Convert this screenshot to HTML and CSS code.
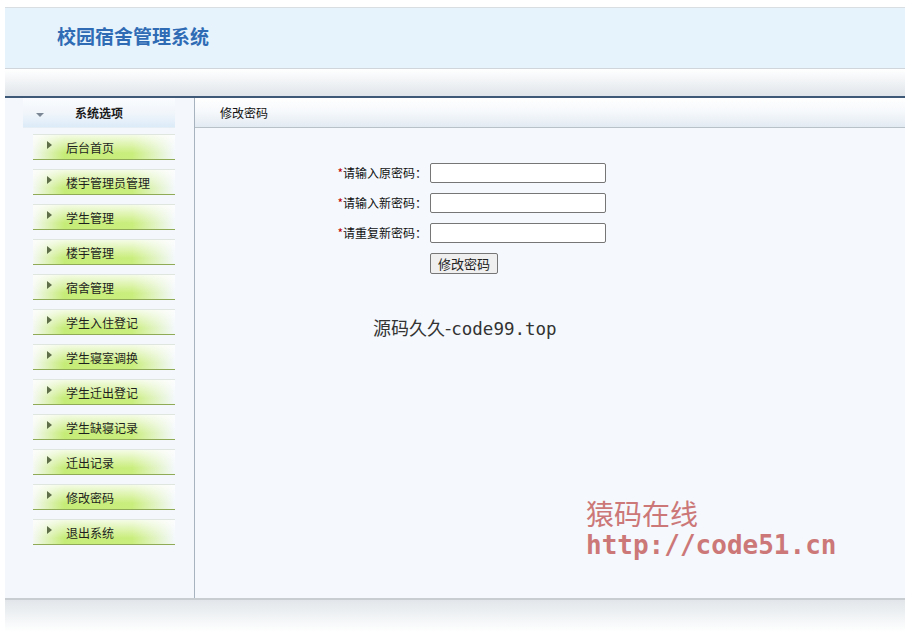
FILE: index.html
```html
<!DOCTYPE html>
<html lang="zh-CN">
<head>
  <meta charset="UTF-8">
  <title>校园宿舍管理系统</title>
  <link rel="stylesheet" href="styles.css">
</head>
<body>
  <div class="page">
    <!-- 顶部 -->
    <div class="top">
      <h1 class="logo">校园宿舍管理系统</h1>
    </div>
    <div class="bar"></div>

    <div class="main">
      <!-- 左侧菜单 -->
      <div class="side">
        <div class="side-title"><span class="down"></span>系统选项</div>
        <ul class="menu">
          <li><span class="arrow"></span>后台首页</li>
          <li><span class="arrow"></span>楼宇管理员管理</li>
          <li><span class="arrow"></span>学生管理</li>
          <li><span class="arrow"></span>楼宇管理</li>
          <li><span class="arrow"></span>宿舍管理</li>
          <li><span class="arrow"></span>学生入住登记</li>
          <li><span class="arrow"></span>学生寝室调换</li>
          <li><span class="arrow"></span>学生迁出登记</li>
          <li><span class="arrow"></span>学生缺寝记录</li>
          <li><span class="arrow"></span>迁出记录</li>
          <li><span class="arrow"></span>修改密码</li>
          <li><span class="arrow"></span>退出系统</li>
        </ul>
      </div>

      <!-- 右侧内容 -->
      <div class="content">
        <div class="content-title">修改密码</div>
        <form class="form">
          <label><i>*</i>请输入原密码：</label>
          <input type="password">
          <label><i>*</i>请输入新密码：</label>
          <input type="password">
          <label><i>*</i>请重复新密码：</label>
          <input type="password">
          <span></span>
          <div><button type="button">修改密码</button></div>
        </form>
        <p class="mark">源码久久-<span class="mono">code99.top</span></p>
        <div class="stamp">
          <div class="stamp-cn">猿码在线</div>
          <div class="stamp-url">http://code51.cn</div>
        </div>
      </div>
    </div>

    <div class="foot"></div>
  </div>
</body>
</html>
```

FILE: styles.css
```css
/* 基础 */
body {
  margin: 0;
  background: #ffffff;
  font-family: "Noto Sans CJK SC", "DejaVu Sans", sans-serif;
  font-size: 12px;
  color: #222222;
}

.page {
  width: 900px;
  margin: 0 0 0 5px;
  padding-top: 7px;
}

/* 顶部标题 */
.top {
  height: 60px;
  border-top: 1px solid #d9dee3;
  background: #e6f3fc;
  display: flex;
  align-items: center;
}

.logo {
  margin: 0 0 6px 52px;
  font-size: 19px;
  font-weight: 700;
  color: #2f6bb5;
}

.bar {
  height: 27px;
  border-top: 1px solid #cfd5db;
  border-bottom: 2px solid #3e5878;
  background: linear-gradient(#ffffff, #f3f5f7 40%, #dfe5ea);
}

/* 主体 */
.main {
  display: flex;
  height: 500px;
}

.side {
  width: 190px;
  border-right: 1px solid #a7b3bf;
  background: #f4f8fc;
  padding-left: 18px;
  box-sizing: border-box;
}

.side-title {
  width: 152px;
  height: 30px;
  display: flex;
  align-items: center;
  justify-content: center;
  position: relative;
  font-weight: 700;
  color: #1a1a1a;
  background: linear-gradient(#fafcfe, #f1f6fb 50%, #dcebf8);
  border-bottom: 1px solid #e6eef5;
  box-sizing: border-box;
}

.down {
  position: absolute;
  left: 13px;
  top: 15px;
  border-left: 4px solid transparent;
  border-right: 4px solid transparent;
  border-top: 4px solid #7b8794;
}

.menu {
  list-style: none;
  margin: 6px 0 0 10px;
  padding: 0;
  width: 142px;
}

.menu li {
  height: 24px;
  margin-bottom: 9px;
  border-top: 1px solid #dfe6df;
  border-bottom: 1px solid #8fab55;
  display: flex;
  align-items: center;
  padding-left: 33px;
  position: relative;
  color: #1e1e1e;
  background:
    linear-gradient(rgba(255, 255, 255, 0.8), rgba(255, 255, 255, 0) 75%),
    linear-gradient(90deg, #f4f8f2, #c6ec78 22%, #caee7e 70%, rgba(244, 248, 252, 0));
}

.arrow {
  position: absolute;
  left: 14px;
  top: 6px;
  border-top: 4px solid transparent;
  border-bottom: 4px solid transparent;
  border-left: 5px solid #5e6e48;
}

/* 内容区 */
.content {
  flex: 1;
  background: #f5f9fd;
  position: relative;
}

.content-title {
  height: 29px;
  line-height: 29px;
  padding-left: 25px;
  border-bottom: 1px solid #b8c0c8;
  background: linear-gradient(#ffffff, #f5f8fb 50%, #e2eaf2);
  color: #111111;
}

.form {
  display: grid;
  grid-template-columns: 232px 176px;
  column-gap: 3px;
  row-gap: 10px;
  margin-top: 35px;
}

.form label {
  text-align: right;
  line-height: 20px;
  color: #111111;
}

.form i {
  font-style: normal;
  color: #c00000;
}

.form input {
  height: 20px;
  margin: 0;
  padding: 0 3px;
  border: 1px solid #767676;
  border-radius: 2px;
  background: #ffffff;
  box-sizing: border-box;
}

.form button {
  height: 21px;
  width: 68px;
  padding: 0;
  font-family: inherit;
  font-size: 13px;
  color: #222222;
  border: 1px solid #767676;
  border-radius: 2px;
  background: #efefef;
}

.mark {
  margin: 40px 0 0 178px;
  font-size: 18px;
  color: #333333;
}

.mono {
  font-family: "DejaVu Sans Mono", monospace;
  font-size: 17.5px;
}

/* 水印 */
.stamp {
  position: absolute;
  left: 391px;
  top: 398px;
  color: #c86a6a;
  opacity: 0.9;
}

.stamp-cn {
  font-size: 28px;
  line-height: 34px;
}

.stamp-url {
  font-family: "DejaVu Sans Mono", monospace;
  font-size: 26px;
  font-weight: 700;
  line-height: 30px;
}

/* 底部 */
.foot {
  height: 32px;
  border-top: 2px solid #c8cdd2;
  background: linear-gradient(#e2e6ea, #f6f8f9 70%, #ffffff);
}
```
